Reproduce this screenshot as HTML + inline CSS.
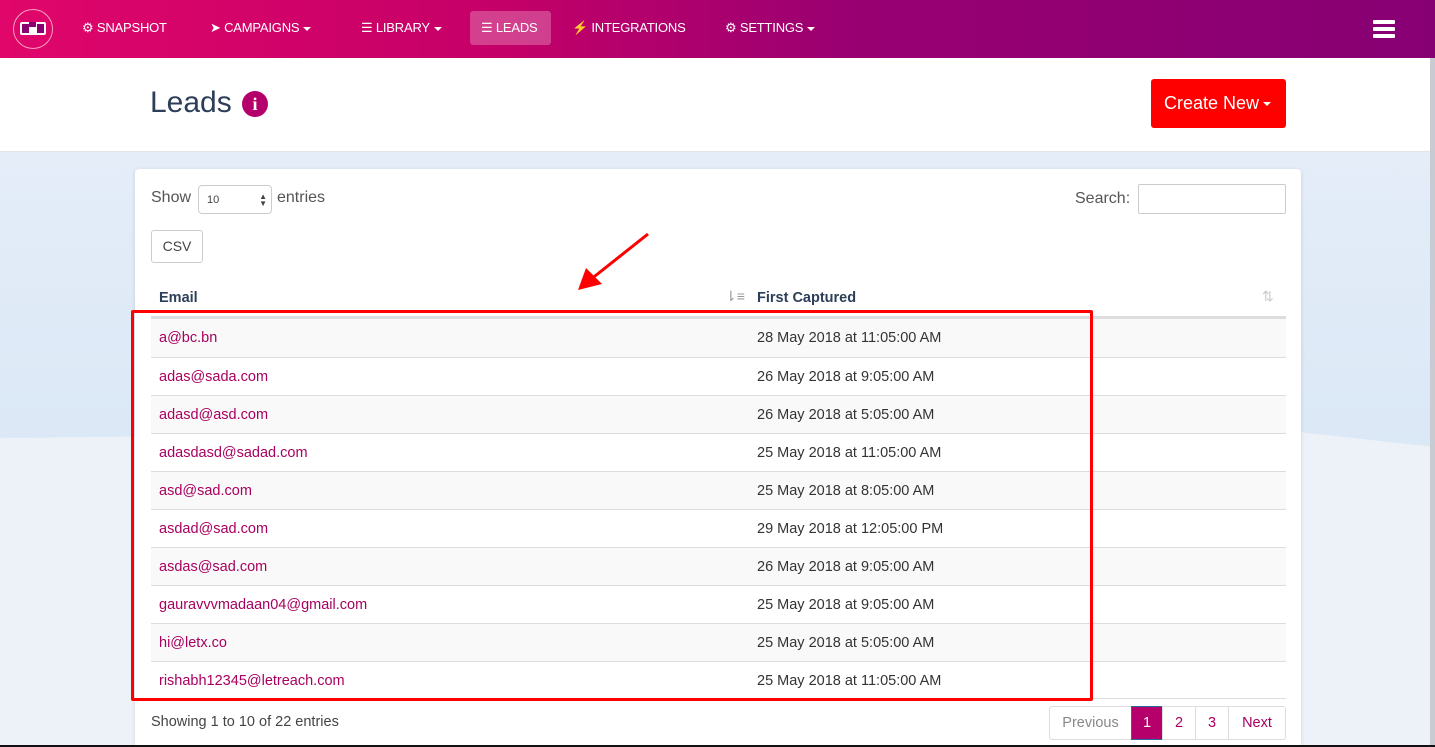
<!DOCTYPE html>
<html style="width:1435px;height:747px;overflow:hidden"><head><meta charset="utf-8"><style>
*{box-sizing:border-box;margin:0;padding:0}
body{width:1435px;height:747px;overflow:hidden;font-family:"Liberation Sans",sans-serif;background:#edf1f8;position:relative;color:#333}
.bgtop{position:absolute;left:0;top:152px;width:1435px;height:295px;background:linear-gradient(180deg,#e4edf8,#dbe8f6);clip-path:polygon(0 0,100% 0,100% 100%,85% 92%,0 97%)}
.nav{position:absolute;left:0;top:0;width:1435px;height:58px;background:linear-gradient(90deg,#e0066a 0%,#c40068 35%,#980072 60%,#870073 100%);color:#fff;font-size:13px}
.nav .it{position:absolute;top:20px;letter-spacing:-0.2px}
.logo{position:absolute;left:13px;top:9px;width:40px;height:40px;border:1.5px solid #f6a0c0;border-radius:50%}
.logo i{position:absolute;left:6px;top:12px;width:26px;height:13px;background:#fff;border-radius:2px}
.logo b{position:absolute;top:14px;width:7px;height:9px;background:#8a0070}
.active{position:absolute;left:470px;top:11px;width:81px;height:34px;background:rgba(255,255,255,.25);border-radius:3px}
.car{display:inline-block;border-left:4px solid transparent;border-right:4px solid transparent;border-top:4px solid #fff;vertical-align:middle;margin-left:4px}
.hdr{position:absolute;left:0;top:58px;width:1430px;height:94px;background:#fff;border-bottom:1px solid #e4e4e4}
.card{position:absolute;left:135px;top:169px;width:1166px;height:578px;background:#fff;border-radius:4px 4px 0 0;box-shadow:0 1px 4px rgba(0,0,0,.12)}
.row{position:absolute;left:151px;width:1135px;height:38px;border-top:1px solid #ddd;font-size:14.5px}
.row span{position:absolute;top:11px}
.e{left:8px;color:#a8005f}.d{left:606px;color:#333}
.pg{position:absolute;top:706px;height:34px;border:1px solid #ddd;font-size:14.5px;text-align:center;line-height:32px;color:#a8005f;background:#fff}
</style></head><body>
<div class="bgtop"></div>
<div style="position:absolute;right:0;top:58px;width:5px;height:689px;background:#c8ccd2"></div>
<div class="nav">
 <div class="logo"><i></i><b style="left:8px"></b><b style="left:23px"></b><b style="left:15px;top:12px;height:5px"></b></div>
 <div class="it" style="left:82px">⚙ SNAPSHOT</div>
 <div class="it" style="left:210px">➤ CAMPAIGNS<span class="car"></span></div>
 <div class="it" style="left:361px">☰ LIBRARY<span class="car"></span></div>
 <div class="active"></div>
 <div class="it" style="left:481px">☰ LEADS</div>
 <div class="it" style="left:572px">⚡ INTEGRATIONS</div>
 <div class="it" style="left:725px">⚙ SETTINGS<span class="car"></span></div>
 <div style="position:absolute;left:1373px;top:20px;width:22px;height:4px;background:#fff;border-radius:1px;box-shadow:0 7px 0 #fff,0 14px 0 #fff"></div>
</div>
<div class="hdr">
 <div style="position:absolute;left:150px;top:28px;font-size:30px;color:#2c3e58">Leads</div>
 <div style="position:absolute;left:242px;top:33px;width:26px;height:26px;border-radius:50%;background:#b5006b;color:#fff;font:bold 18px 'Liberation Serif',serif;text-align:center;line-height:26px">i</div>
 <div style="position:absolute;left:1151px;top:21px;width:135px;height:49px;background:#ff0000;border-radius:3px;color:#fff;font-size:18px;line-height:49px;padding-left:13px">Create New<span class="car"></span></div>
</div>
<div class="card"></div>
<div style="position:absolute;left:151px;top:189px;font-size:16px;color:#555">Show</div>
<div style="position:absolute;left:198px;top:185px;width:74px;height:29px;border:1px solid #ccc;border-radius:4px;font-size:11px;padding:8px 0 0 8px;color:#444">10<span style="position:absolute;right:4px;top:7px;font-size:8px;line-height:7px">▲<br>▼</span></div>
<div style="position:absolute;left:277px;top:189px;font-size:16px;color:#555">entries</div>
<div style="position:absolute;left:1075px;top:190px;font-size:16px;color:#555">Search:</div>
<div style="position:absolute;left:1138px;top:184px;width:148px;height:30px;border:1px solid #ccc;border-radius:2px"></div>
<div style="position:absolute;left:151px;top:230px;width:52px;height:33px;border:1px solid #ccc;border-radius:3px;font-size:14px;text-align:center;line-height:31px;color:#444">CSV</div>
<div style="position:absolute;left:159px;top:290px;font-size:14.5px;font-weight:bold;color:#2c3e58">Email</div>
<div style="position:absolute;left:725px;top:288px;font-size:14px;color:#999">⇂≡</div>
<div style="position:absolute;left:757px;top:290px;font-size:14.5px;font-weight:bold;color:#2c3e58">First Captured</div>
<div style="position:absolute;left:1262px;top:288px;font-size:14px;color:#ccc">⇅</div>
<div style="position:absolute;left:151px;top:316px;width:1135px;height:3px;background:#ddd"></div>
<div class="row" style="top:319px;background:#f9f9f9;border-top:0"><span class="e">a@bc.bn</span><span class="d">28 May 2018 at 11:05:00 AM</span></div>
<div class="row" style="top:357px"><span class="e">adas@sada.com</span><span class="d">26 May 2018 at 9:05:00 AM</span></div>
<div class="row" style="top:395px;background:#f9f9f9"><span class="e">adasd@asd.com</span><span class="d">26 May 2018 at 5:05:00 AM</span></div>
<div class="row" style="top:433px"><span class="e">adasdasd@sadad.com</span><span class="d">25 May 2018 at 11:05:00 AM</span></div>
<div class="row" style="top:471px;background:#f9f9f9"><span class="e">asd@sad.com</span><span class="d">25 May 2018 at 8:05:00 AM</span></div>
<div class="row" style="top:509px"><span class="e">asdad@sad.com</span><span class="d">29 May 2018 at 12:05:00 PM</span></div>
<div class="row" style="top:547px;background:#f9f9f9"><span class="e">asdas@sad.com</span><span class="d">26 May 2018 at 9:05:00 AM</span></div>
<div class="row" style="top:585px"><span class="e">gauravvvmadaan04@gmail.com</span><span class="d">25 May 2018 at 9:05:00 AM</span></div>
<div class="row" style="top:623px;background:#f9f9f9"><span class="e">hi@letx.co</span><span class="d">25 May 2018 at 5:05:00 AM</span></div>
<div class="row" style="top:661px;border-bottom:1px solid #ddd"><span class="e">rishabh12345@letreach.com</span><span class="d">25 May 2018 at 11:05:00 AM</span></div>
<div style="position:absolute;left:131px;top:310px;width:962px;height:391px;border:3px solid #ff0000;border-radius:2px"></div>
<svg style="position:absolute;left:570px;top:228px" width="90" height="70"><line x1="78" y1="6" x2="20" y2="52" stroke="#f00" stroke-width="3"/><polygon points="8,62 16,40 32,56" fill="#f00"/></svg>
<div style="position:absolute;left:151px;top:714px;font-size:14.5px;color:#444">Showing 1 to 10 of 22 entries</div>
<div class="pg" style="left:1049px;width:83px;color:#888;border-radius:3px 0 0 3px">Previous</div>
<div class="pg" style="left:1131px;width:32px;background:#b5006b;color:#fff;border-color:#2a6ca0">1</div>
<div class="pg" style="left:1162px;width:34px">2</div>
<div class="pg" style="left:1195px;width:34px">3</div>
<div class="pg" style="left:1228px;width:58px;border-radius:0 3px 3px 0">Next</div>
<div style="position:absolute;left:0;top:745px;width:1435px;height:2px;background:#111"></div>
</body></html>
